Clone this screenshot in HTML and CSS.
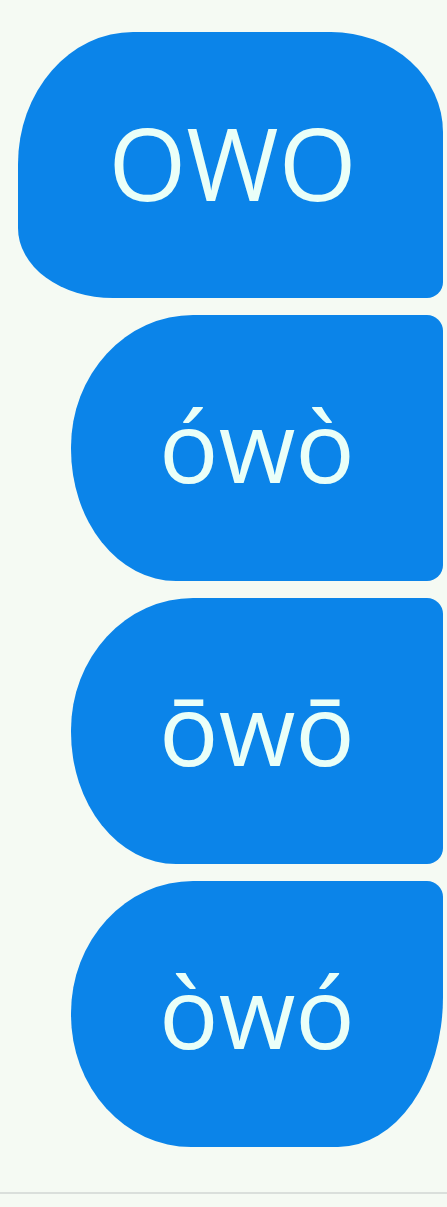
FILE: index.html
```html
<!DOCTYPE html>
<html lang="en">
<head>
<meta charset="utf-8">
<title>owo</title>
<link rel="stylesheet" href="styles.css">
</head>
<body>
<main class="thread">
  <div class="bubble bubble-first">OWO</div>
  <div class="bubble bubble-mid">ówò</div>
  <div class="bubble bubble-mid">ōwō</div>
  <div class="bubble bubble-last">òwó</div>
</main>
<div class="divider"></div>
</body>
</html>
```

FILE: styles.css
```css
html, body {
  margin: 0;
  padding: 0;
}
body {
  background: #f5faf3;
  width: 447px;
  height: 1207px;
  overflow: hidden;
  font-family: "Open Sans", "Noto Sans", sans-serif;
}
.thread {
  display: flex;
  flex-direction: column;
  align-items: flex-end;
  gap: 17px;
  padding: 32px 4px 0 0;
}
.bubble {
  background: #0b84e9;
  color: #eafff8;
  display: flex;
  align-items: center;
  justify-content: center;
  height: 266px;
  width: 372px;
  font-size: 99px;
  line-height: 1;
  box-sizing: border-box;
}
.bubble-first {
  width: 425px;
  font-size: 100px;
  padding-left: 4px;
  padding-bottom: 6px;
  border-radius: 115px 112px 16px 95px / 132px 100px 16px 70px;
}
.bubble-mid {
  border-radius: 122px 16px 16px 105px / 132px 16px 16px 132px;
  padding-bottom: 8px;
}
.bubble-last {
  border-radius: 122px 16px 105px 120px / 132px 16px 150px 132px;
  padding-bottom: 8px;
}
.divider {
  margin-top: 45px;
  height: 2px;
  background: #dadfdb;
}
```
